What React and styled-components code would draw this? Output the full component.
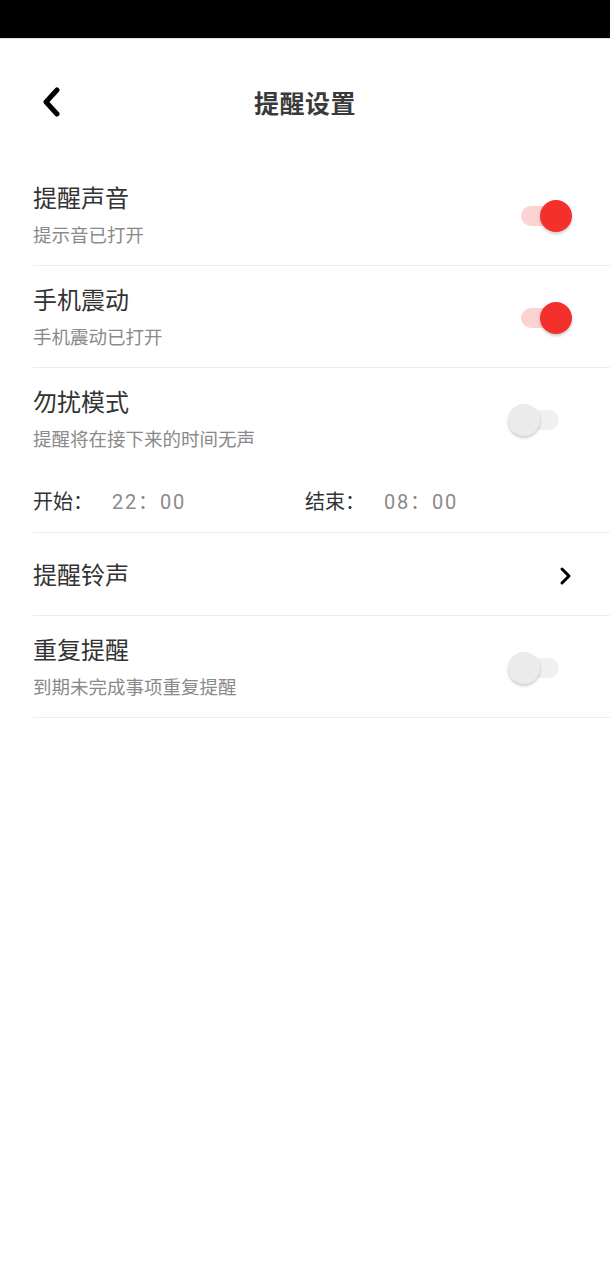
import React, { useState } from "react";
import styled, { createGlobalStyle } from "styled-components";

const GlobalStyle = createGlobalStyle`
  html, body {
    margin: 0;
    padding: 0;
    background: #ffffff;
    font-family: Roboto, "Noto Sans CJK SC", sans-serif;
  }
`;

const Page = styled.div`
  width: 610px;
  min-height: 1280px;
  background: #ffffff;
`;

// Statusleiste oben
const StatusBar = styled.div`
  height: 39px;
  background: #000000;
  border-bottom: 1px solid #dcdcdc;
  box-sizing: border-box;
`;

const Header = styled.div`
  position: relative;
  height: 125px;
  display: flex;
  align-items: center;
  justify-content: center;
`;

const BackButton = styled.button`
  position: absolute;
  left: 36px;
  top: 46px;
  width: 32px;
  height: 34px;
  padding: 0;
  border: none;
  background: none;
  display: flex;
  align-items: center;
  justify-content: center;
  cursor: pointer;
`;

const Title = styled.h1`
  margin: 0;
  font-size: 25px;
  font-weight: 700;
  color: #3a3a3a;
  letter-spacing: 0.5px;
`;

const List = styled.div`
  padding-left: 33px;
`;

const Row = styled.div`
  display: flex;
  align-items: center;
  justify-content: space-between;
  padding: ${(p) => (p.$single ? "26px 0 22px" : "18px 0 16px")};
  padding-right: ${(p) => (p.$arrow ? "38px" : "51px")};
  border-bottom: ${(p) => (p.$noBorder ? "none" : "1px solid #ededed")};
`;

const Block = styled.div`
  border-bottom: 1px solid #ededed;
`;

const TextCol = styled.div`
  display: flex;
  flex-direction: column;
`;

const ItemTitle = styled.div`
  font-size: 24px;
  line-height: 34px;
  color: #333333;
`;

const ItemSub = styled.div`
  margin-top: 7px;
  font-size: 18.5px;
  line-height: 26px;
  color: #8a8a8a;
`;

const TimeLine = styled.div`
  display: flex;
  align-items: center;
  padding: 19px 0 16px;
  font-size: 20px;
  line-height: 28px;
`;

const TimeGroup = styled.div`
  width: 272px;
  display: flex;
`;

const TimeLabel = styled.span`
  color: #333333;
  width: 79px;
`;

const TimeValue = styled.span`
  color: #8a8a8a;
  letter-spacing: 1.8px;
`;

const SwitchTrack = styled.button`
  position: relative;
  width: 38px;
  height: 20px;
  padding: 0;
  border: none;
  border-radius: 10px;
  background: ${(p) => (p.$on ? "#fbd3d3" : "#f0f0f0")};
  cursor: pointer;
  flex-shrink: 0;
`;

const SwitchThumb = styled.span`
  position: absolute;
  top: -6px;
  left: ${(p) => (p.$on ? "19px" : "-13px")};
  width: 32px;
  height: 32px;
  border-radius: 50%;
  background: ${(p) => (p.$on ? "#f3302b" : "#ebebeb")};
  box-shadow: 0 2px 3px rgba(0, 0, 0, 0.2);
`;

const Switch = ({ on, onToggle }) => (
  <SwitchTrack $on={on} onClick={onToggle}>
    <SwitchThumb $on={on} />
  </SwitchTrack>
);

const App = () => {
  const [sound, setSound] = useState(true);
  const [vibrate, setVibrate] = useState(true);
  const [quiet, setQuiet] = useState(false);
  const [repeat, setRepeat] = useState(false);

  return (
    <Page>
      <GlobalStyle />
      <StatusBar />
      <Header>
        <BackButton>
          <svg width="22" height="30" viewBox="0 0 22 30">
            <polyline
              points="16,3 5,15 16,27"
              fill="none"
              stroke="#000"
              strokeWidth="5"
              strokeLinecap="round"
              strokeLinejoin="round"
            />
          </svg>
        </BackButton>
        <Title>提醒设置</Title>
      </Header>

      <List>
        <Row>
          <TextCol>
            <ItemTitle>提醒声音</ItemTitle>
            <ItemSub>提示音已打开</ItemSub>
          </TextCol>
          <Switch on={sound} onToggle={() => setSound(!sound)} />
        </Row>

        <Row>
          <TextCol>
            <ItemTitle>手机震动</ItemTitle>
            <ItemSub>手机震动已打开</ItemSub>
          </TextCol>
          <Switch on={vibrate} onToggle={() => setVibrate(!vibrate)} />
        </Row>

        {/* Nicht-stören mit Zeitraum */}
        <Block>
          <Row $noBorder>
            <TextCol>
              <ItemTitle>勿扰模式</ItemTitle>
              <ItemSub>提醒将在接下来的时间无声</ItemSub>
            </TextCol>
            <Switch on={quiet} onToggle={() => setQuiet(!quiet)} />
          </Row>
          <TimeLine>
            <TimeGroup>
              <TimeLabel>开始：</TimeLabel>
              <TimeValue>22：00</TimeValue>
            </TimeGroup>
            <TimeGroup>
              <TimeLabel>结束：</TimeLabel>
              <TimeValue>08：00</TimeValue>
            </TimeGroup>
          </TimeLine>
        </Block>

        <Row $single $arrow>
          <ItemTitle>提醒铃声</ItemTitle>
          <svg width="14" height="20" viewBox="0 0 14 20">
            <polyline
              points="4,3 11,10 4,17"
              fill="none"
              stroke="#000"
              strokeWidth="3"
              strokeLinecap="round"
              strokeLinejoin="round"
            />
          </svg>
        </Row>

        <Row>
          <TextCol>
            <ItemTitle>重复提醒</ItemTitle>
            <ItemSub>到期未完成事项重复提醒</ItemSub>
          </TextCol>
          <Switch on={repeat} onToggle={() => setRepeat(!repeat)} />
        </Row>
      </List>
    </Page>
  );
};

export default App;
